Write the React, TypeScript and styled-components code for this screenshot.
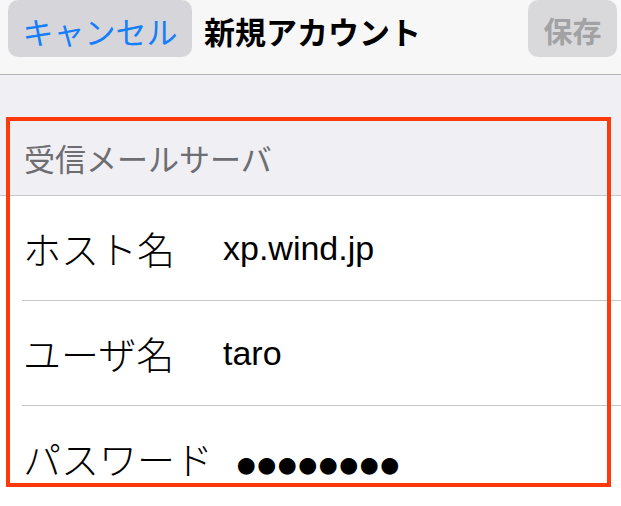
import React from 'react';
import styled, { createGlobalStyle } from 'styled-components';

const GlobalStyle = createGlobalStyle`
  html, body {
    margin: 0;
    padding: 0;
    background: #ffffff;
  }
  body {
    width: 621px;
    height: 506px;
    overflow: hidden;
    font-family: "Noto Sans CJK JP", sans-serif;
  }
`;

const Screen = styled.div`
  position: relative;
  width: 621px;
  height: 506px;
  overflow: hidden;
  background: #ffffff;
`;

const NavBar = styled.div`
  display: flex;
  align-items: flex-start;
  height: 74px;
  padding: 0 4px 0 8px;
  background: #f7f7f8;
  border-bottom: 1px solid #b4b4b8;
`;

const NavButton = styled.div<{ $muted?: boolean }>`
  display: flex;
  align-items: center;
  justify-content: center;
  height: 57px;
  width: ${(p) => (p.$muted ? '89px' : '184px')};
  border-radius: 10px;
  background: ${(p) => (p.$muted ? '#d9d9db' : '#d6d6da')};
  color: ${(p) => (p.$muted ? '#a2a2a4' : '#157efb')};
  font-size: ${(p) => (p.$muted ? '29px' : '31px')};
  font-weight: ${(p) => (p.$muted ? 700 : 400)};
  line-height: 1;
  padding-top: 3px;
  box-sizing: border-box;
`;

const NavTitle = styled.div`
  height: 57px;
  display: flex;
  align-items: center;
  padding-top: 3px;
  box-sizing: border-box;
  margin-left: 12px;
  font-size: 31px;
  font-weight: 700;
  color: #000;
  line-height: 1;
`;

const Spacer = styled.div`
  flex: 1;
`;

const Group = styled.div`
  background: #efeff4;
`;

const GroupHeader = styled.div`
  display: flex;
  align-items: flex-end;
  height: 121px;
  padding: 0 0 22px 24px;
  box-sizing: border-box;
  font-size: 31px;
  line-height: 1;
  color: #6d6d72;
  border-bottom: 1px solid #c8c7cc;
`;

const List = styled.div`
  background: #ffffff;
`;

const Row = styled.div`
  padding-left: 22px;
`;

const RowInner = styled.div`
  display: flex;
  align-items: center;
  gap: 24px;
  height: 104px;
  border-bottom: 1px solid #c8c7cc;
`;

const Label = styled.span`
  min-width: 176px;
  padding-left: 1px;
  font-size: 38px;
  font-weight: 300;
  line-height: 1;
  color: #000;
`;

const Value = styled.span`
  font-family: "Liberation Sans", "Noto Sans CJK JP", sans-serif;
  font-size: 34px;
  line-height: 1;
  color: #000;
`;

const SecretValue = styled.span`
  font-family: "Noto Sans CJK JP", sans-serif;
  font-size: 18.5px;
  letter-spacing: 2px;
  line-height: 1;
  color: #000;
  margin-top: 15px;
`;

const Highlight = styled.div`
  position: absolute;
  top: 117px;
  left: 6px;
  width: 605px;
  height: 370px;
  box-sizing: border-box;
  border: 4px solid #ff3a0a;
  pointer-events: none;
`;

const FIELDS = [
  { label: 'ホスト名', value: 'xp.wind.jp' },
  { label: 'ユーザ名', value: 'taro' },
  { label: 'パスワード', value: '●●●●●●●●', secret: true },
];

const App = () => {
  return (
    <>
      <GlobalStyle />
      <Screen>
        <NavBar>
          <NavButton>キャンセル</NavButton>
          <NavTitle>新規アカウント</NavTitle>
          <Spacer />
          <NavButton $muted>保存</NavButton>
        </NavBar>
        <Group>
          <GroupHeader>受信メールサーバ</GroupHeader>
        </Group>
        <List>
          {FIELDS.map((f) => (
            <Row key={f.label}>
              <RowInner>
                <Label>{f.label}</Label>
                {f.secret ? <SecretValue>{f.value}</SecretValue> : <Value>{f.value}</Value>}
              </RowInner>
            </Row>
          ))}
        </List>
        <Highlight />
      </Screen>
    </>
  );
};

export default App;
